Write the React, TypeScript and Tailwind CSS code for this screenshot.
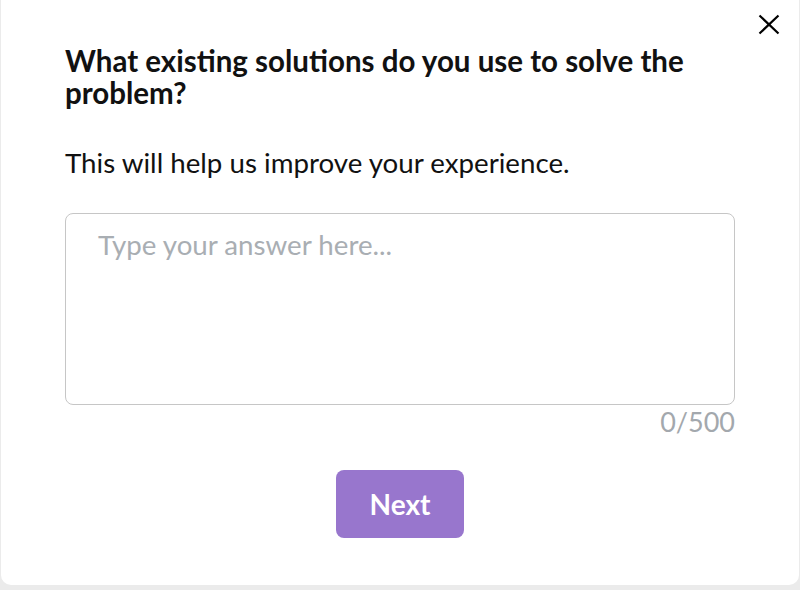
export default function App() {
  return (
    <div className="h-[590px] w-[800px] bg-[#ebebeb] px-px" style={{ fontFamily: "Lato, 'Noto Sans', sans-serif" }}>
      <div className="relative h-[585px] rounded-b-[10px] bg-white px-[64px] pt-[45px]">
        <button className="absolute right-[19px] top-[14px] text-black">
          <svg width="22" height="21" viewBox="0 0 22 21" fill="none" stroke="currentColor" strokeWidth="2.2">
            <path d="M1.5 1.5L20.5 19.5M20.5 1.5L1.5 19.5" />
          </svg>
        </button>

        <h2 className="pr-[40px] text-[29.5px] font-bold leading-[32px] text-[#111]">
          What existing solutions do you use to solve the problem?
        </h2>
        <p className="mt-[38px] text-[27.7px] leading-[32px] text-[#111]">
          This will help us improve your experience.
        </p>

        <div className="mt-[34px]">
          <textarea
            className="block h-[192px] w-full resize-none rounded-[8px] border border-[#c6c6c6] px-[32px] py-[15px] text-[27.7px] leading-[32px] text-[#333] outline-none placeholder:text-[#a9aeb3]"
            placeholder="Type your answer here..."
          />
          <div className="mt-px text-right text-[27px] leading-[32px] text-[#a3a8ad]">0/500</div>
        </div>

        <div className="mt-[32px] flex justify-center">
          <button className="h-[68px] w-[128px] rounded-[8px] bg-[#9876cd] text-[28px] font-bold text-white">
            Next
          </button>
        </div>
      </div>
    </div>
  );
}
